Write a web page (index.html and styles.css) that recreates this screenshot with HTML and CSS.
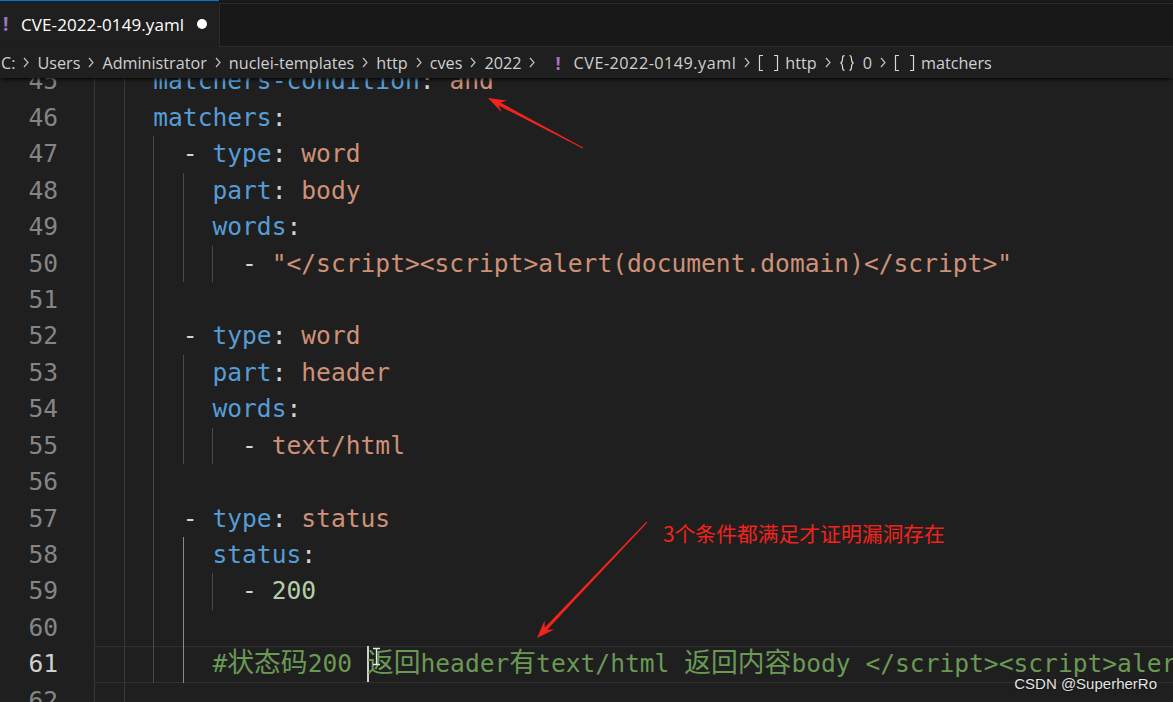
FILE: index.html
```html
<!DOCTYPE html>
<html lang="zh-CN">
<head>
    <meta charset="UTF-8" />
    <title>CVE-2022-0149.yaml</title>
    <link rel="stylesheet" href="styles.css">
</head>
<body>
    <div class="tabs">
        <div class="tab">
            <span class="yaml-icon">!</span>
            <span class="tab-name">CVE-2022-0149.yaml</span>
            <span class="dirty"></span>
        </div>
        <div class="tab-fill"></div>
    </div>

    <div class="crumbs">
        <span>C:</span><svg class="chev" viewBox="0 0 6 11"><polyline points="1,1 5,5.5 1,10" /></svg>
        <span>Users</span><svg class="chev" viewBox="0 0 6 11"><polyline points="1,1 5,5.5 1,10" /></svg>
        <span>Administrator</span><svg class="chev" viewBox="0 0 6 11"><polyline points="1,1 5,5.5 1,10" /></svg>
        <span>nuclei-templates</span><svg class="chev" viewBox="0 0 6 11"><polyline points="1,1 5,5.5 1,10" /></svg>
        <span>http</span><svg class="chev" viewBox="0 0 6 11"><polyline points="1,1 5,5.5 1,10" /></svg>
        <span>cves</span><svg class="chev" viewBox="0 0 6 11"><polyline points="1,1 5,5.5 1,10" /></svg>
        <span>2022</span><svg class="chev" viewBox="0 0 6 11"><polyline points="1,1 5,5.5 1,10" /></svg>
        <span class="crumb-icon yaml">!</span><span class="file">CVE-2022-0149.yaml</span><svg class="chev" viewBox="0 0 6 11"><polyline points="1,1 5,5.5 1,10" /></svg>
        <svg class="sym arr" viewBox="0 0 21 18"><path d="M5 1.5H1.5v15H5 M16 1.5h3.5v15H16" /></svg><span>http</span><svg class="chev" viewBox="0 0 6 11"><polyline points="1,1 5,5.5 1,10" /></svg>
        <svg class="sym obj" viewBox="0 0 16 18"><path d="M5.5 1.5C3.5 1.5 3.5 3 3.5 5s0 3.5-2 4c2 0.5 2 2 2 4s0 3.5 2 3.5 M10.5 1.5c2 0 2 1.5 2 3.5s0 3.5 2 4c-2 0.5-2 2-2 4s0 3.5-2 3.5" /></svg><span>0</span><svg class="chev" viewBox="0 0 6 11"><polyline points="1,1 5,5.5 1,10" /></svg>
        <svg class="sym arr" viewBox="0 0 21 18"><path d="M5 1.5H1.5v15H5 M16 1.5h3.5v15H16" /></svg><span>matchers</span>
    </div>

    <div class="editor">
        <div class="row"><span class="ln">45</span><div class="src"><i class="g"></i><i class="g"></i><span class="t"><span class="k">matchers-condition</span>: <span class="s">and</span></span></div></div>
        <div class="row"><span class="ln">46</span><div class="src"><i class="g"></i><i class="g"></i><span class="t"><span class="k">matchers</span>:</span></div></div>
        <div class="row"><span class="ln">47</span><div class="src"><i class="g"></i><i class="g"></i><i class="g m"></i><span class="t">- <span class="k">type</span>: <span class="s">word</span></span></div></div>
        <div class="row"><span class="ln">48</span><div class="src"><i class="g"></i><i class="g"></i><i class="g m"></i><i class="g m"></i><span class="t"><span class="k">part</span>: <span class="s">body</span></span></div></div>
        <div class="row"><span class="ln">49</span><div class="src"><i class="g"></i><i class="g"></i><i class="g m"></i><i class="g m"></i><span class="t"><span class="k">words</span>:</span></div></div>
        <div class="row"><span class="ln">50</span><div class="src"><i class="g"></i><i class="g"></i><i class="g m"></i><i class="g m"></i><i class="g m"></i><span class="t">- <span class="s">"&lt;/script&gt;&lt;script&gt;alert(document.domain)&lt;/script&gt;"</span></span></div></div>
        <div class="row"><span class="ln">51</span><div class="src"><i class="g"></i><i class="g"></i><i class="g m"></i></div></div>
        <div class="row"><span class="ln">52</span><div class="src"><i class="g"></i><i class="g"></i><i class="g m"></i><span class="t">- <span class="k">type</span>: <span class="s">word</span></span></div></div>
        <div class="row"><span class="ln">53</span><div class="src"><i class="g"></i><i class="g"></i><i class="g m"></i><i class="g m"></i><span class="t"><span class="k">part</span>: <span class="s">header</span></span></div></div>
        <div class="row"><span class="ln">54</span><div class="src"><i class="g"></i><i class="g"></i><i class="g m"></i><i class="g m"></i><span class="t"><span class="k">words</span>:</span></div></div>
        <div class="row"><span class="ln">55</span><div class="src"><i class="g"></i><i class="g"></i><i class="g m"></i><i class="g m"></i><i class="g m"></i><span class="t">- <span class="s">text/html</span></span></div></div>
        <div class="row"><span class="ln">56</span><div class="src"><i class="g"></i><i class="g"></i><i class="g m"></i></div></div>
        <div class="row"><span class="ln">57</span><div class="src"><i class="g"></i><i class="g"></i><i class="g m"></i><span class="t">- <span class="k">type</span>: <span class="s">status</span></span></div></div>
        <div class="row"><span class="ln">58</span><div class="src"><i class="g"></i><i class="g"></i><i class="g m"></i><i class="g a"></i><span class="t"><span class="k">status</span>:</span></div></div>
        <div class="row"><span class="ln">59</span><div class="src"><i class="g"></i><i class="g"></i><i class="g m"></i><i class="g a"></i><i class="g m"></i><span class="t">- <span class="n">200</span></span></div></div>
        <div class="row"><span class="ln">60</span><div class="src"><i class="g"></i><i class="g"></i><i class="g m"></i><i class="g a"></i></div></div>
        <div class="row"><span class="ln active">61</span><div class="src cur"><i class="g"></i><i class="g"></i><i class="g m"></i><i class="g a"></i><span class="t c">#<span class="cjk">状态码</span>200 <span class="caret"></span><span class="cjk">返回</span>header<span class="cjk">有</span>text/html <span class="cjk">返回内容</span>body &lt;/script&gt;&lt;script&gt;alert(document.domain)&lt;/script&gt;</span></div></div>
        <div class="row"><span class="ln">62</span><div class="src"><i class="g"></i><i class="g"></i></div></div>
    </div>

    <!-- red annotation arrows drawn over the screenshot -->
    <svg class="marks" viewBox="0 0 1173 702">
        <polygon points="488,98 507,100.6 500.4,102.6 583.1,147.6 582.9,148.4 498.6,105.6 501.6,112.2" />
        <polygon points="537,638 544.6,620.4 544.8,627.4 646.6,521.6 647.4,522.4 547.1,629.7 554.2,629.4" />
        <g class="ibeam">
            <path d="M373 648.5h3l0.5 0.8 0.5 -0.8h3 M376.5 649.5v14.5 M373 664.5h3l0.5 -0.8 0.5 0.8h3" />
        </g>
    </svg>
    <div class="note">3个条件都满足才证明漏洞存在</div>
    <div class="watermark">CSDN @SuperherRo</div>
</body>
</html>
```

FILE: styles.css
```css
:root {
    --editor-bg: #1f1f1f;
    --tabbar-bg: #181818;
    --border: #2b2b2b;
    --key: #569cd6;
    --str: #ce9178;
    --num: #b5cea8;
    --comment: #6a9955;
    --red: #f3231b;
}

body {
    margin: 0;
    width: 1173px;
    height: 702px;
    overflow: hidden;
    position: relative;
    background-color: var(--editor-bg);
    font-family: 'Open Sans', 'Noto Sans', sans-serif;
}

/* tab strip */
.tabs {
    display: flex;
    height: 47px;
    background-color: var(--tabbar-bg);
}

.tab {
    display: flex;
    align-items: center;
    width: 219px;
    box-sizing: border-box;
    border-top: 1px solid #0078d4;
    background-color: var(--editor-bg);
    color: #fff;
    font-size: 17px;
}

.yaml-icon {
    width: 21px;
    padding-left: 3px;
    box-sizing: border-box;
    color: #a074c4;
    font-weight: 700;
    font-size: 19px;
}

.tab-name {
    letter-spacing: 0.1px;
}

.dirty {
    width: 10px;
    height: 10px;
    margin-left: 13px;
    border-radius: 50%;
    background-color: #fff;
}

.tab-fill {
    flex: 1;
    margin-top: 3px;
    border-left: 1px solid var(--border);
    border-top: 1px solid var(--border);
    border-bottom: 1px solid var(--border);
}

/* breadcrumbs */
.crumbs {
    position: relative;
    z-index: 1;
    display: flex;
    align-items: center;
    height: 31px;
    padding-left: 1px;
    background-color: var(--editor-bg);
    box-shadow: 0 3px 4px -2px #000;
    color: #d0d0d0;
    font-size: 16.2px;
    white-space: nowrap;
}

.chev {
    flex: none;
    width: 6px;
    height: 11px;
    margin: 0 8px;
}

.chev polyline {
    fill: none;
    stroke: #c0c0c0;
    stroke-width: 1.2;
}

.crumb-icon.yaml {
    margin: 0 13px 0 12px;
    color: #a074c4;
    font-weight: 700;
    font-size: 18px;
}

.file {
    letter-spacing: 0.5px;
}

.sym {
    flex: none;
    height: 18px;
    margin-right: 6px;
}

.sym.arr {
    width: 21px;
}

.sym.obj {
    width: 16px;
    margin-right: 8px;
}

.sym path {
    fill: none;
    stroke: #d8d8d8;
    stroke-width: 1.2;
}

/* code */
.editor {
    margin-top: -14.7px;
    font-family: 'DejaVu Sans Mono', monospace;
    font-size: 24.6px;
}

.row {
    display: flex;
    height: 36.45px;
    line-height: 36.45px;
}

.ln {
    flex: none;
    width: 94px;
    padding-right: 36px;
    box-sizing: border-box;
    text-align: right;
    color: #858585;
}

.ln.active {
    color: #d0d0d0;
}

.src {
    flex: 1;
    display: flex;
    overflow: hidden;
    color: #d4d4d4;
    white-space: pre;
}

.src.cur {
    box-shadow: inset 0 1px #303030, inset 0 -1px #303030;
}

.g {
    flex: none;
    width: 2ch;
    box-shadow: inset 1px 0 #383838;
}

.g.m {
    box-shadow: inset 1px 0 #4a4a4a;
}

.g.a {
    box-shadow: inset 1px 0 #8a8a8a;
}

.t {
    white-space: pre;
}

.k { color: var(--key); }
.s { color: var(--str); }
.n { color: var(--num); }
.c { color: var(--comment); }

.cjk {
    font-family: 'Noto Sans CJK SC', sans-serif;
    font-size: 26.8px;
    line-height: 1;
}

.caret {
    display: inline-block;
    width: 2px;
    height: 36px;
    margin-right: -2px;
    vertical-align: top;
    background-color: #cfcfcf;
}

/* overlays */
.marks {
    position: absolute;
    left: 0;
    top: 0;
    width: 1173px;
    height: 702px;
    pointer-events: none;
}

.marks polygon {
    fill: var(--red);
}

.ibeam path {
    fill: none;
    stroke: #e8e8e8;
    stroke-width: 1.3;
}

.note {
    position: absolute;
    left: 663px;
    top: 519px;
    color: var(--red);
    font-family: 'Noto Sans CJK SC', sans-serif;
    font-size: 20.8px;
    line-height: 28px;
}

.watermark {
    position: absolute;
    right: 16px;
    bottom: 10px;
    color: #e4e4e4;
    font-family: 'Liberation Sans', Arial, sans-serif;
    font-size: 15px;
    text-shadow: 0 0 2px #000;
}
```
